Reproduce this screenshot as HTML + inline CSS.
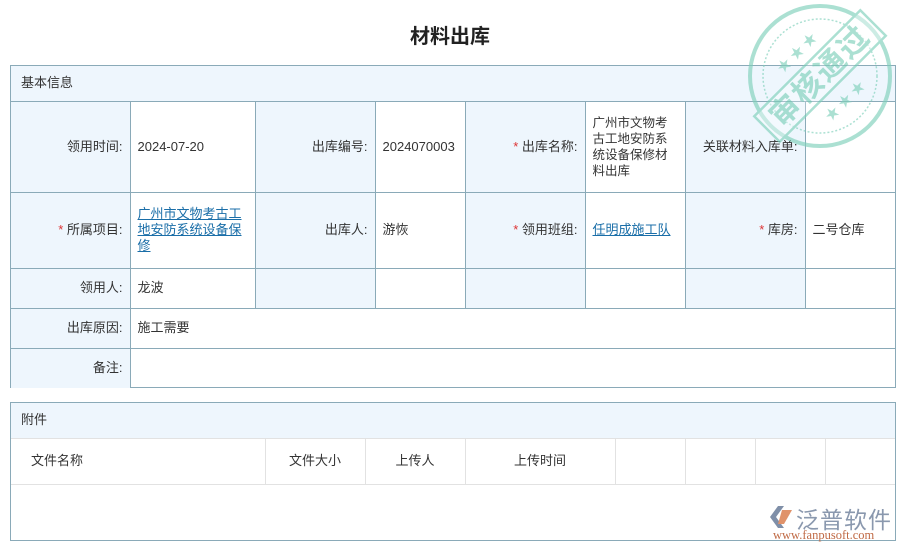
<!DOCTYPE html>
<html><head><meta charset="utf-8"><style>
*{margin:0;padding:0;box-sizing:border-box}
body{width:900px;height:551px;background:#fff;font-family:"Liberation Sans","Noto Sans CJK SC",sans-serif;font-size:13px;color:#333;position:relative;overflow:hidden}
h1{position:absolute;top:20px;left:0;width:900px;text-align:center;font-size:20px;font-weight:bold;color:#222}
.box{position:absolute;left:10px;width:886px;border:1px solid #8aaab8}
.hd{background:#eef6fd;height:36px;line-height:34px;padding-left:10px;border-bottom:1px solid #8aaab8}
table{border-collapse:collapse;width:100%;table-layout:fixed}
td{border:1px solid #8aaab8;padding:0 7px;vertical-align:middle;line-height:16px}
td.l{background:#eef6fd;text-align:right}
tr td:first-child{border-left:none}tr td:last-child{border-right:none}
tr:first-child td{border-top:none}
.main tr:last-child td{border-bottom:none}
.s{color:#d33}
a{color:#1a6ea8;text-decoration:underline}
.att td{border:1px solid #e2e2e2;border-top:none}
</style></head><body>
<h1>材料出库</h1>
<div class="box" style="top:65px;height:323px">
<div class="hd">基本信息</div>
<table class="main">
<colgroup><col style="width:119px"><col style="width:125px"><col style="width:120px"><col style="width:90px"><col style="width:120px"><col style="width:100px"><col style="width:120px"><col></colgroup>
<tr style="height:90px"><td class="l">领用时间:</td><td>2024-07-20</td><td class="l">出库编号:</td><td>2024070003</td><td class="l"><span class="s">*</span> 出库名称:</td><td style="font-size:12.5px">广州市文物考古工地安防系统设备保修材料出库</td><td class="l">关联材料入库单:</td><td></td></tr>
<tr style="height:76px"><td class="l"><span class="s">*</span> 所属项目:</td><td><a>广州市文物考古工地安防系统设备保修</a></td><td class="l">出库人:</td><td>游恢</td><td class="l"><span class="s">*</span> 领用班组:</td><td><a>任明成施工队</a></td><td class="l"><span class="s">*</span> 库房:</td><td>二号仓库</td></tr>
<tr style="height:40px"><td class="l">领用人:</td><td>龙波</td><td class="l"></td><td></td><td class="l"></td><td></td><td class="l"></td><td></td></tr>
<tr style="height:40px"><td class="l">出库原因:</td><td colspan="7">施工需要</td></tr>
<tr style="height:40px"><td class="l">备注:</td><td colspan="7"></td></tr>
</table></div>
<div class="box" style="top:402px;height:139px">
<div class="hd" style="border-bottom:1px solid #e2e2e2">附件</div>
<table class="att">
<colgroup><col style="width:254px"><col style="width:100px"><col style="width:100px"><col style="width:150px"><col style="width:70px"><col style="width:70px"><col style="width:70px"><col></colgroup>
<tr style="height:45px"><td style="padding-left:20px;border-left:none">文件名称</td><td style="text-align:center">文件大小</td><td style="text-align:center">上传人</td><td style="text-align:center">上传时间</td><td></td><td></td><td></td><td style="border-right:none"></td></tr>
</table></div>
<svg style="position:absolute;left:745px;top:3px;opacity:.65" width="150" height="146" viewBox="0 0 150 146">
<g fill="none" stroke="#7fd0bb"><circle cx="75" cy="73" r="70" stroke-width="4"/><circle cx="75" cy="73" r="57" stroke-width="1.5" stroke-dasharray="2 2"/></g>
<g transform="rotate(-45 75 73)"><rect x="0" y="55" width="150" height="36" fill="#fff" fill-opacity=".4" stroke="#7fd0bb" stroke-width="2.5"/>
<text x="75" y="83" text-anchor="middle" font-size="30" font-weight="bold" fill="#7fd0bb" font-family="Noto Sans CJK SC,sans-serif" letter-spacing="2">审核通过</text>
<text x="75" y="45" text-anchor="middle" font-size="14" fill="#7fd0bb">★ ★ ★</text>
<text x="75" y="113" text-anchor="middle" font-size="14" fill="#7fd0bb">★ ★ ★</text></g>
</svg>
<div style="position:absolute;left:770px;top:503px;width:124px">
<svg style="position:absolute;left:0;top:3px" width="26" height="22" viewBox="0 0 26 22"><path d="M8 0L0 11L8 22H14L6 11L14 0Z" fill="#7f8fa8"/><path d="M12 4H22L14 18H8Z" fill="#e0926a"/></svg>
<div style="position:absolute;left:26px;top:-2px;font-size:23px;color:#8a98ae;letter-spacing:1px;white-space:nowrap">泛普软件</div>
<div style="position:absolute;left:3px;top:25px;font-size:12.5px;color:#c06a45;font-family:'Liberation Serif',serif;white-space:nowrap">www.fanpusoft.com</div>
</div>
</body></html>
